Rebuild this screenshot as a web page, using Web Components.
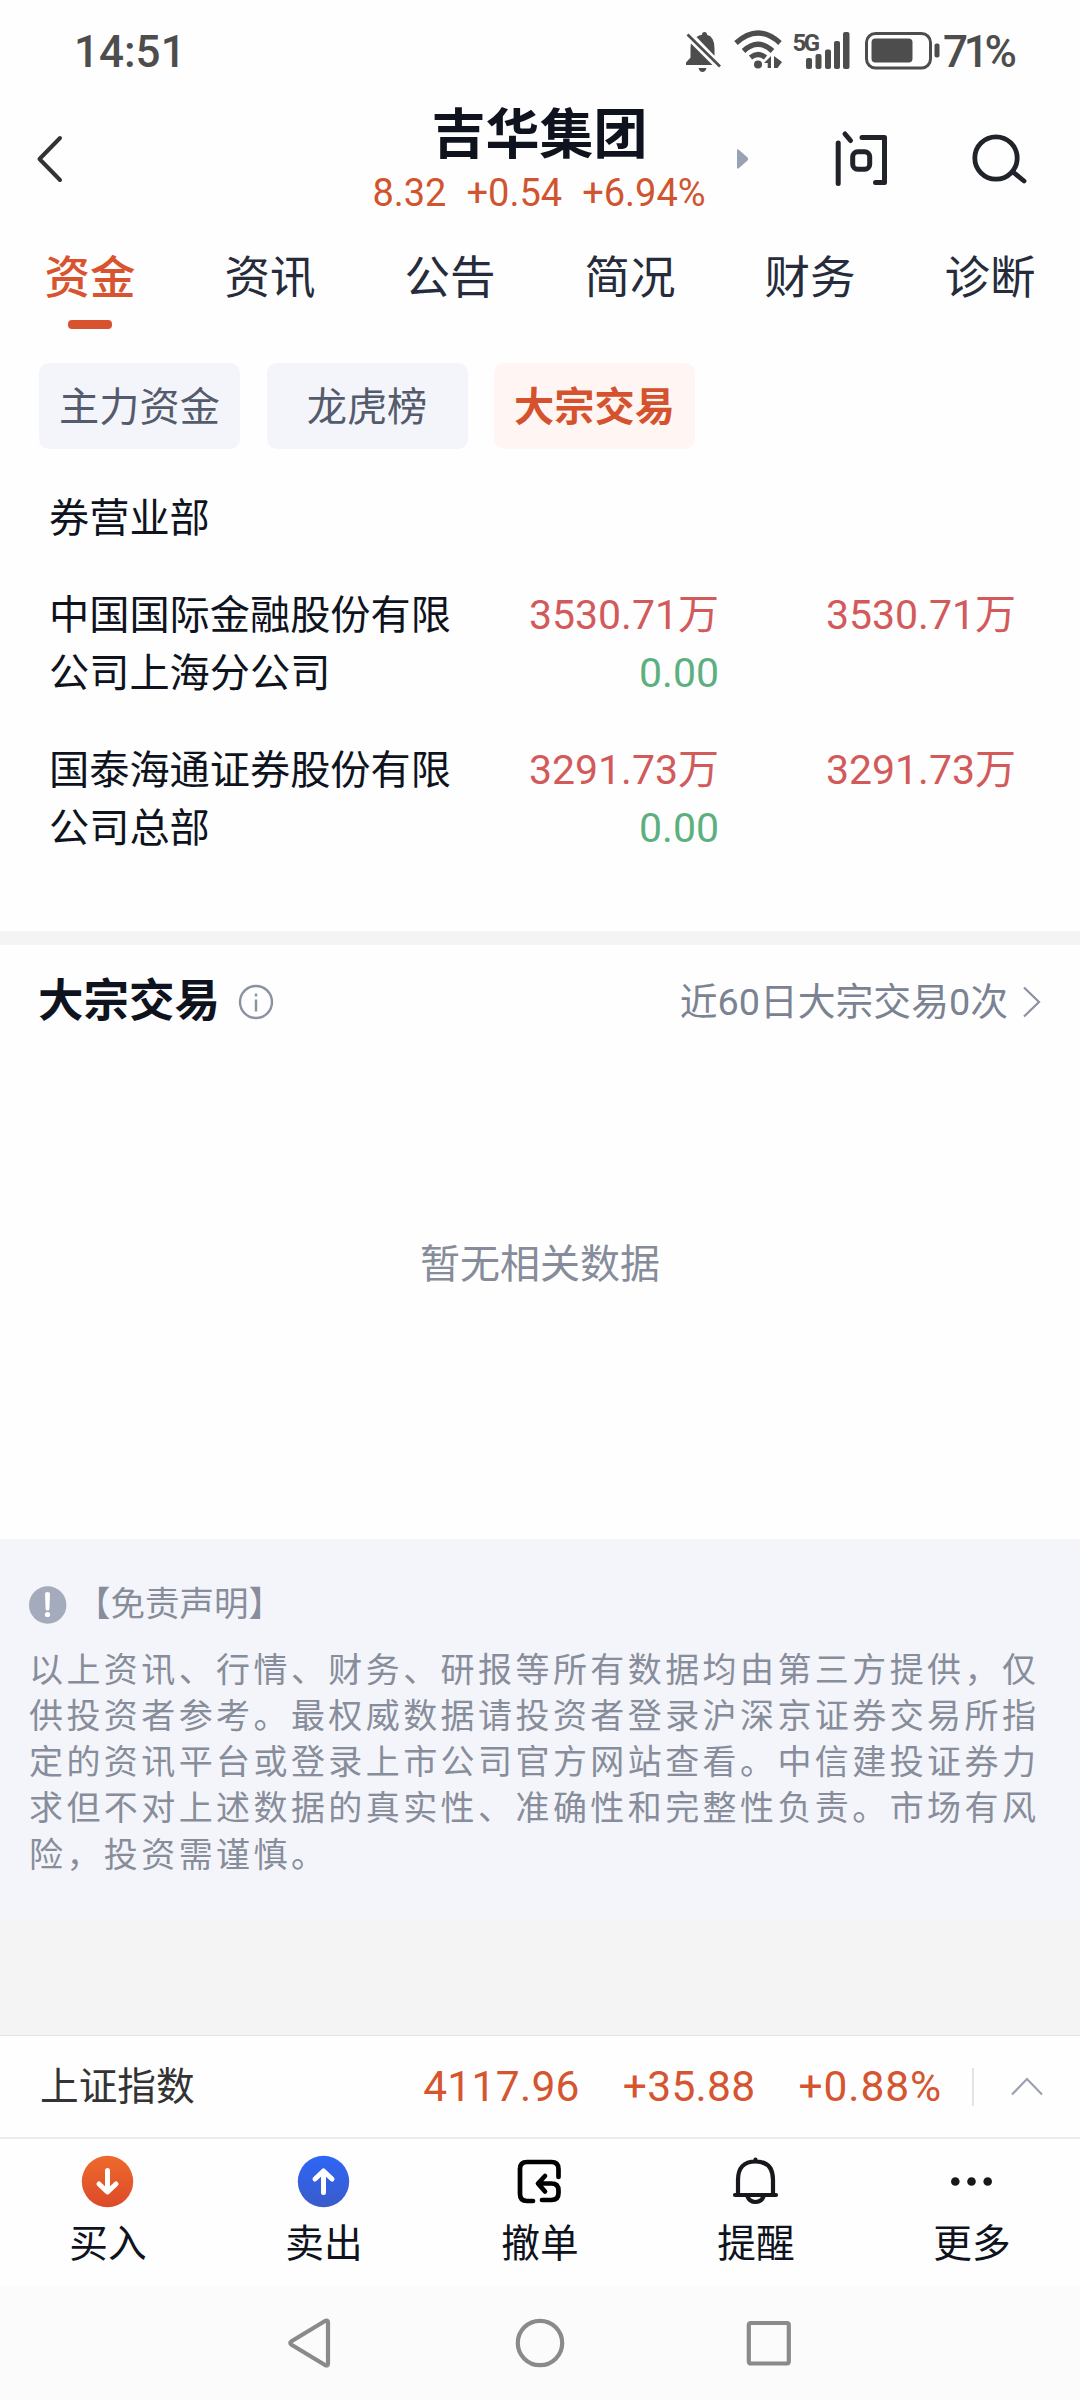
<!DOCTYPE html>
<html lang="zh-CN">
<head>
<meta charset="utf-8">
<title>吉华集团</title>
<style>
  body {
    margin: 0;
    width: 1080px;
    height: 2400px;
    display: flex;
    flex-direction: column;
    background: #fefefe;
    color: #0e131d;
    font-family: Roboto, "Noto Sans CJK SC", sans-serif;
    text-spacing-trim: space-all;
  }
</style>
</head>
<body>
  <status-bar time="14:51" battery="71"></status-bar>
  <stock-header name="吉华集团">
    <span>8.32</span><span>+0.54</span><span>+6.94%</span>
  </stock-header>
  <tab-bar>
    <tab-item active>资金</tab-item>
    <tab-item>资讯</tab-item>
    <tab-item>公告</tab-item>
    <tab-item>简况</tab-item>
    <tab-item>财务</tab-item>
    <tab-item>诊断</tab-item>
  </tab-bar>
  <chip-group>
    <chip-item>主力资金</chip-item>
    <chip-item>龙虎榜</chip-item>
    <chip-item active>大宗交易</chip-item>
  </chip-group>
  <broker-table>
    <broker-row>券营业部</broker-row>
    <broker-row buy="3530.71万" sell="0.00" net="3530.71万">中国国际金融股份有限公司上海分公司</broker-row>
    <broker-row buy="3291.73万" sell="0.00" net="3291.73万">国泰海通证券股份有限公司总部</broker-row>
  </broker-table>
  <block-trade title-text="大宗交易">
    <span slot="more">近60日大宗交易0次</span>
    暂无相关数据
  </block-trade>
  <disclaimer-box>
    <span slot="title">【免责声明】</span>
    以上资讯、行情、财务、研报等所有数据均由第三方提供，仅供投资者参考。最权威数据请投资者登录沪深京证券交易所指定的资讯平台或登录上市公司官方网站查看。中信建投证券力求但不对上述数据的真实性、准确性和完整性负责。市场有风险，投资需谨慎。
  </disclaimer-box>
  <index-ticker name="上证指数" value="4117.96" change="+35.88" percent="+0.88%"></index-ticker>
  <action-bar>
    <action-item icon="buy">买入</action-item>
    <action-item icon="sell">卖出</action-item>
    <action-item icon="cancel">撤单</action-item>
    <action-item icon="bell">提醒</action-item>
    <action-item icon="more">更多</action-item>
  </action-bar>
  <system-nav></system-nav>

<script>
// Base commune : chaque composant fournit son squelette via template()
class BaseElement extends HTMLElement {
  connectedCallback() {
    if (this.shadowRoot) return;
    this.attachShadow({ mode: "open" });
    this.shadowRoot.innerHTML = this.template();
  }

  attr(name) {
    return this.getAttribute(name) ?? "";
  }
}

class StatusBar extends BaseElement {
  template() {
    return /* HTML */ `
      <style>
        :host {
          display: flex;
          align-items: center;
          justify-content: space-between;
          height: 102px;
          padding: 0 66px 0 74px;
          color: #4d4d4d;
          font-size: 44px;
          line-height: 60px;
          font-weight: 500;
        }
        .time { padding-top: 1px; }
        .icons { display: flex; align-items: center; }
        .percent { width: 71px; padding: 1px 0 0 2px; letter-spacing: -4.200px; }
        svg { display: block; fill: currentColor; }
        svg text { font: 700 24px Roboto, sans-serif; letter-spacing: -2.500px; }
      </style>
      <span class="time">${this.attr("time")}</span>
      <div class="icons">
        <svg width="256" height="44" viewBox="685 29 256 44">
          <!-- Cloche barrée -->
          <path d="M691 43.500L712.500 65H686v-2.500l4.500-5V49q0-3 .5-5.500z"/>
          <path d="M696.500 37q2.500-1.800 5.500-2.300 0-2.700 2.500-2.700t2.500 2.700q7.500 2 7.500 13.500v7.500z"/>
          <path d="M687.500 34.500L720 66.500" fill="none" stroke="currentColor" stroke-width="2.700"/>
          <path d="M698.500 68h8q-1 4-4 4t-4-4z"/>
          <!-- Wifi -->
          <g fill="none" stroke="currentColor" stroke-width="5.200">
            <path d="M736 43Q758 23 780 43"/>
            <path d="M743.500 51Q758 37.500 772.500 51"/>
            <path d="M750.500 57.500Q758 51.500 765.500 57.500"/>
          </g>
          <circle cx="758" cy="64.500" r="4"/>
          <path d="M764 63l7-7v12h-3.300v-5zM774 56l8 6-4.500 6H774z"/>
          <text x="792.500" y="51">5G</text>
          <rect x="806" y="58" width="6" height="11" rx="2"/>
          <rect x="815.500" y="54" width="6" height="15" rx="2"/>
          <rect x="825" y="49.500" width="6" height="19.500" rx="2"/>
          <rect x="834" y="41" width="6" height="28" rx="2"/>
          <rect x="843" y="32" width="6.500" height="37" rx="2"/>
          <!-- Batterie -->
          <rect x="866.500" y="33.500" width="64" height="34.500" rx="9" fill="none" stroke="currentColor" stroke-width="3"/>
          <rect x="871.500" y="38.500" width="41" height="24" rx="4"/>
          <rect x="934.500" y="43.500" width="5" height="14" rx="2"/>
        </svg>
        <span class="percent">${this.attr("battery")}%</span>
      </div>
    `;
  }
}

class StockHeader extends BaseElement {
  template() {
    return /* HTML */ `
      <style>
        :host {
          display: grid;
          grid-template-columns: 360px 360px 360px;
          align-items: center;
          height: 114px;
        }
        svg { display: block; fill: none; stroke: #20242a; stroke-linecap: round; stroke-linejoin: round; }
        .back { margin-left: 36px; stroke: #333; }
        .center { display: flex; flex-direction: column; align-items: center; gap: 5px; padding-top: 2px; }
        h1 { margin: 0 1px 0 0; font-size: 54px; line-height: 60px; font-weight: 700; white-space: nowrap; }
        .quote {
          display: flex;
          gap: 20px;
          margin-right: 2px;
          font-size: 38px;
          line-height: 44px;
          color: #d0552f;
        }
        .tools { display: flex; align-items: center; padding-left: 17px; }
        .next { fill: #99a2b2; stroke: none; margin-right: 86px; }
        .ask { margin-right: 82px; }
      </style>
      <svg class="back" width="28" height="50" viewBox="36 134 28 50" stroke-width="4">
        <path d="M60 138L39.500 159 60 180"/>
      </svg>
      <div class="center">
        <h1>${this.attr("name")}</h1>
        <div class="quote"><slot></slot></div>
      </div>
      <div class="tools">
        <svg class="next" width="12" height="20" viewBox="0 0 12 20"><path d="M0 .5l1.500 0 9 8q1.500 1.500 0 3l-9 8H0z"/></svg>
        <svg class="ask" width="54" height="58" viewBox="835 130 54 58" stroke-width="5">
          <path d="M838.200 143v40.500M845 134l5.500 6.500M862 137.500h22.500v45H875.500"/>
          <rect x="852.700" y="151.700" width="17" height="17.500" rx="5"/>
        </svg>
        <svg width="56" height="54" viewBox="972 132 56 54" stroke-width="4.800">
          <circle cx="997" cy="158" r="21.200"/><path d="M1014 172l11 9"/>
        </svg>
      </div>
    `;
  }
}

class TabBar extends BaseElement {
  template() {
    return /* HTML */ `
      <style>
        :host { display: flex; padding-top: 33px; height: 80px; margin-bottom: 34px; }
      </style>
      <slot></slot>
    `;
  }
}

class TabItem extends BaseElement {
  template() {
    return /* HTML */ `
      <style>
        :host {
          flex: 1;
          display: flex;
          flex-direction: column;
          align-items: center;
          gap: 11px;
          font-size: 45.500px;
          line-height: 60px;
          color: #262c3b;
        }
        :host([active]) { color: #d85430; font-weight: 500; }
        :host([active])::after {
          content: "";
          width: 44px;
          height: 9px;
          border-radius: 4px;
          background: #d9522f;
        }
      </style>
      <slot></slot>
    `;
  }
}

class ChipGroup extends BaseElement {
  template() {
    return /* HTML */ `
      <style>
        :host { display: flex; gap: 26.500px; padding-left: 39px; }
      </style>
      <slot></slot>
    `;
  }
}

class ChipItem extends BaseElement {
  template() {
    return /* HTML */ `
      <style>
        :host {
          display: flex;
          justify-content: center;
          width: 201px;
          border-radius: 10px;
          background: #f4f5fa;
          color: #545b6c;
          font-size: 40.200px;
          line-height: 86px;
          padding-top: 2px;
          height: 84px;
        }
        :host([active]) { background: #fff6f3; color: #d4522e; font-weight: 700; }
      </style>
      <slot></slot>
    `;
  }
}

class BrokerTable extends BaseElement {
  template() {
    return /* HTML */ `
      <style>
        :host {
          display: flex;
          flex-direction: column;
          gap: 38.500px;
          box-sizing: border-box;
          height: 482px;
          padding: 40px 0 0 49px;
        }
      </style>
      <slot></slot>
    `;
  }
}

class BrokerRow extends BaseElement {
  template() {
    return /* HTML */ `
      <style>
        :host {
          display: grid;
          grid-template-columns: 404px 266px 297px;
          font-size: 40.200px;
          line-height: 58.300px;
        }
        .name { padding-top: 1px; margin-bottom: -1px; }
        .amounts { text-align: right; color: #d25a5a; font-size: 41px; }
        .amounts div + div { color: #5cb07f; }
      </style>
      <div class="name"><slot></slot></div>
      <div class="amounts">
        <div>${this.attr("buy")}</div>
        <div>${this.attr("sell")}</div>
      </div>
      <div class="amounts"><div>${this.attr("net")}</div></div>
    `;
  }
}

class BlockTrade extends BaseElement {
  template() {
    return /* HTML */ `
      <style>
        :host { display: block; box-sizing: border-box; height: 608px; border-top: 14px solid #f4f4f4; }
        header { display: flex; align-items: center; height: 113px; padding: 0 38px 0 38px; }
        h2 { margin: 0 18px 0 0; padding-top: 1px; font-size: 45.500px; font-weight: 700; line-height: 60px; }
        svg { display: block; fill: none; }
        .more {
          display: flex;
          align-items: center;
          gap: 14px;
          margin-left: auto;
          color: #7b8292;
          font-size: 37.800px;
          line-height: 60px;
        }
        .empty { padding-top: 177px; text-align: center; font-size: 40px; line-height: 60px; color: #868c9a; }
      </style>
      <header>
        <h2>${this.attr("title-text")}</h2>
        <svg width="36" height="36" viewBox="0 0 36 36" stroke="#8b91a0" stroke-width="2.400">
          <circle cx="18" cy="18" r="16"/>
          <path d="M18 15.500v12M18 9.500v3"/>
        </svg>
        <div class="more">
          <slot name="more"></slot>
          <svg width="20" height="34" viewBox="0 0 20 34" stroke="#8b91a0" stroke-width="2.200">
            <path d="M2 2.500l15 14.500L2 31.500"/>
          </svg>
        </div>
      </header>
      <div class="empty"><slot></slot></div>
    `;
  }
}

class DisclaimerBox extends BaseElement {
  template() {
    return /* HTML */ `
      <style>
        :host {
          display: block;
          box-sizing: border-box;
          height: 382px;
          padding: 40px 29px 0;
          background: #f4f5fa;
          color: #878d9b;
        }
        .title { display: flex; align-items: center; gap: 9px; height: 50px; font-size: 34.500px; line-height: 50px; }
        svg { display: block; }
        p {
          margin: 17.500px 0 0;
          font-size: 34px;
          line-height: 46.300px;
          letter-spacing: 3.420px;
          line-break: anywhere;
        }
      </style>
      <div class="title">
        <svg width="38" height="40" viewBox="0 0 38 40">
          <circle cx="18.700" cy="21" r="18.700" fill="#a4abbc"/>
          <path d="M16 9.500q0-1.500 2.500-1.500t2.500 1.500l-.6 15.500q-.2 1.500-1.900 1.500t-1.900-1.500z" fill="#fff"/>
          <circle cx="18.500" cy="30.500" r="2.600" fill="#fff"/>
        </svg>
        <slot name="title"></slot>
      </div>
      <p><slot></slot></p>
    `;
  }
}

class IndexTicker extends BaseElement {
  template() {
    return /* HTML */ `
      <style>
        :host {
          display: flex;
          align-items: center;
          box-sizing: border-box;
          height: 216px;
          padding: 1px 36px 0 40px;
          border-top: 114px solid #f4f4f4;
          box-shadow: inset 0 1px #e2e2e2;
          font-size: 38.700px;
          line-height: 60px;
          color: #333;
        }
        .values {
          display: flex;
          gap: 43px;
          margin-left: auto;
          font-size: 42.500px;
          color: #d4552f;
        }
        .values span { letter-spacing: .3px; }
        .values span:last-child { letter-spacing: .9px; }
        i { width: 2px; height: 38px; margin: 0 36px 0 30px; background: #e1e4e8; }
        svg { display: block; fill: none; stroke: #9ba1af; stroke-width: 2.200; }
      </style>
      <span>${this.attr("name")}</span>
      <div class="values">
        <span>${this.attr("value")}</span>
        <span>${this.attr("change")}</span>
        <span>${this.attr("percent")}</span>
      </div>
      <i></i>
      <svg width="34" height="20" viewBox="0 0 34 20"><path d="M2 17.500L17 2 32 17.500"/></svg>
    `;
  }
}

class ActionBar extends BaseElement {
  template() {
    return /* HTML */ `
      <style>
        :host {
          display: flex;
          box-sizing: border-box;
          height: 149px;
          border-top: 2px solid #e9edee;
        }
      </style>
      <slot></slot>
    `;
  }
}

const ACTION_ICONS = {
  buy: `
    <linearGradient id="g" x2="0" y2="1"><stop stop-color="#ee6a2c"/><stop offset="1" stop-color="#dc4a2a"/></linearGradient>
    <circle cx="27.500" cy="28.500" r="25.700" fill="url(#g)"/>
    <path d="M27.500 17.500v21M19 31L27.500 39l8.500-8" stroke="#fff" stroke-width="5"/>`,
  sell: `
    <linearGradient id="g" x2="0" y2="1"><stop stop-color="#2e66f6"/><stop offset="1" stop-color="#3a5bcb"/></linearGradient>
    <circle cx="27.500" cy="28.500" r="25.700" fill="url(#g)"/>
    <path d="M27.500 39.500V18.500M19 26L27.500 18l8.500 8" stroke="#fff" stroke-width="5"/>`,
  cancel: `
    <path stroke="#000" stroke-width="4.700" d="M46.500 24v-8q0-7-7-7H15q-7 0-7 7v25q0 7 7 7H21
      M26.500 30.500H39.500q7 0 7 7v2.500q0 7-7 7H30M33 23L26 30.500l7 8"/>`,
  bell: `
    <path stroke="#16181c" stroke-width="4.200" d="M7 42H48M10 41V27Q10 8.500 27.500 8.500T45 27V41M27.500 6.500v1M19.500 43.500q2 5.500 8 5.500t8-5.500"/>`,
  more: `
    <g fill="#16181c"><circle cx="11.300" cy="28.500" r="4.300"/><circle cx="27.500" cy="28.500" r="4.300"/><circle cx="43.700" cy="28.500" r="4.300"/></g>`,
};

class ActionItem extends BaseElement {
  template() {
    return /* HTML */ `
      <style>
        :host {
          flex: 1;
          display: flex;
          flex-direction: column;
          align-items: center;
          gap: 10px;
          padding-top: 14px;
          font-size: 38.700px;
          line-height: 50px;
        }
        svg { display: block; fill: none; stroke-linecap: round; stroke-linejoin: round; }
      </style>
      <svg width="56" height="56" viewBox="0 0 56 56">${ACTION_ICONS[this.attr("icon")]}</svg>
      <slot></slot>
    `;
  }
}

class SystemNav extends BaseElement {
  template() {
    return /* HTML */ `
      <style>
        :host {
          display: flex;
          align-items: center;
          justify-content: center;
          gap: 179px;
          height: 114px;
          background: #fbfbfb;
        }
        svg { display: block; fill: none; stroke: #8a8a8a; stroke-width: 4.200; stroke-linejoin: round; }
      </style>
      <svg width="50" height="50" viewBox="0 0 50 50"><path d="M5.500 23.200Q3 25 5.500 26.800L39 47Q42 48.300 42 45.500V4.500Q42 1.700 39 3z"/></svg>
      <svg width="50" height="50" viewBox="0 0 50 50"><circle cx="25" cy="25" r="22.200"/></svg>
      <svg width="50" height="50" viewBox="0 0 50 50"><rect x="4.800" y="5" width="40" height="40.500" rx="2"/></svg>
    `;
  }
}

customElements.define("status-bar", StatusBar);
customElements.define("stock-header", StockHeader);
customElements.define("tab-bar", TabBar);
customElements.define("tab-item", TabItem);
customElements.define("chip-group", ChipGroup);
customElements.define("chip-item", ChipItem);
customElements.define("broker-table", BrokerTable);
customElements.define("broker-row", BrokerRow);
customElements.define("block-trade", BlockTrade);
customElements.define("disclaimer-box", DisclaimerBox);
customElements.define("index-ticker", IndexTicker);
customElements.define("action-bar", ActionBar);
customElements.define("action-item", ActionItem);
customElements.define("system-nav", SystemNav);
</script>
</body>
</html>
